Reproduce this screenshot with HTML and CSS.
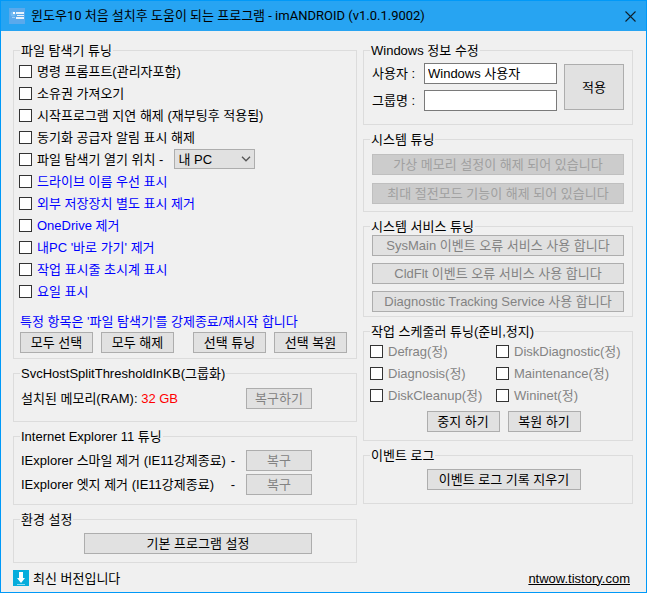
FILE: index.html
```html
<!DOCTYPE html>
<html lang="ko">
<head>
<meta charset="utf-8">
<meta name="viewport" content="width=device-width, initial-scale=1">
<title>imANDROID</title>
<link rel="stylesheet" href="styles.css">
</head>
<body>
<div class="window">
  <header class="titlebar">
    <svg class="app-icon" viewBox="0 0 16 16" aria-hidden="true">
      <rect width="16" height="16" fill="#5aa9ec"/>
      <circle cx="4" cy="6" r="2.5" fill="#74bbf2"/>
      <path d="M4 4h2v2H4z" fill="#fff"/>
      <path d="M7 4h8v2H7zM8 7h7v1H8zM7 9h8v2H7z" fill="#e8f4fd"/>
      <path d="M3 9h3v1H3z" fill="#9bcdf6"/>
    </svg>
    <h1 class="title">윈도우10 처음 설치후 도움이 되는 프로그램 - imANDROID (v1.0.1.9002)</h1>
    <button class="close" type="button" aria-label="닫기">
      <svg viewBox="0 0 11 11" aria-hidden="true"><path d="M.5 .5l10 10M10.5 .5l-10 10" fill="none" stroke="#10202c" stroke-width="1.1"/></svg>
    </button>
  </header>

  <main class="columns">
    <div class="column">
      <fieldset class="group explorer">
        <legend>파일 탐색기 튜닝</legend>
        <div class="checks">
          <label class="check"><input type="checkbox">명령 프롬프트(관리자포함)</label>
          <label class="check"><input type="checkbox">소유권 가져오기</label>
          <label class="check"><input type="checkbox">시작프로그램 지연 해제 (재부팅후 적용됨)</label>
          <label class="check"><input type="checkbox">동기화 공급자 알림 표시 해제</label>
          <div class="check-row">
            <label class="check"><input type="checkbox">파일 탐색기 열기 위치 -</label>
            <span class="select">
              <select aria-label="파일 탐색기 열기 위치"><option>내 PC</option></select>
              <svg viewBox="0 0 10 6" aria-hidden="true"><path d="M1 .8l4 4 4-4" fill="none" stroke="#555" stroke-width="1.3"/></svg>
            </span>
          </div>
          <label class="check blue"><input type="checkbox">드라이브 이름 우선 표시</label>
          <label class="check blue"><input type="checkbox">외부 저장장치 별도 표시 제거</label>
          <label class="check blue"><input type="checkbox">OneDrive 제거</label>
          <label class="check blue"><input type="checkbox">내PC '바로 가기' 제거</label>
          <label class="check blue"><input type="checkbox">작업 표시줄 초시계 표시</label>
          <label class="check blue"><input type="checkbox">요일 표시</label>
        </div>
        <p class="note blue">특정 항목은 '파일 탐색기'를 강제종료/재시작 합니다</p>
        <div class="actions split">
          <div class="actions">
            <button class="btn" type="button">모두 선택</button>
            <button class="btn" type="button">모두 해제</button>
          </div>
          <div class="actions">
            <button class="btn" type="button">선택 튜닝</button>
            <button class="btn" type="button">선택 복원</button>
          </div>
        </div>
      </fieldset>

      <fieldset class="group memory">
        <legend>SvcHostSplitThresholdInKB(그룹화)</legend>
        <div class="item">
          <span>설치된 메모리(RAM): <span class="red">32 GB</span></span>
          <button class="btn restore" type="button" disabled>복구하기</button>
        </div>
      </fieldset>

      <fieldset class="group ie">
        <legend>Internet Explorer 11 튜닝</legend>
        <div class="item">
          <span class="dashed"><span>IExplorer 스마일 제거 (IE11강제종료)</span><span>-</span></span>
          <button class="btn restore" type="button" disabled>복구</button>
        </div>
        <div class="item">
          <span class="dashed"><span>IExplorer 엣지 제거 (IE11강제종료)</span><span>-</span></span>
          <button class="btn restore" type="button" disabled>복구</button>
        </div>
      </fieldset>

      <fieldset class="group prefs">
        <legend>환경 설정</legend>
        <button class="btn" type="button">기본 프로그램 설정</button>
      </fieldset>
    </div>

    <div class="column">
      <fieldset class="group info">
        <legend>Windows 정보 수정</legend>
        <div class="form">
          <label for="user">사용자 :</label>
          <input id="user" type="text" value="Windows 사용자">
          <label for="org">그룹명 :</label>
          <input id="org" type="text">
        </div>
        <button class="btn apply" type="button">적용</button>
      </fieldset>

      <fieldset class="group system">
        <legend>시스템 튜닝</legend>
        <button class="btn dark" type="button" disabled>가상 메모리 설정이 해제 되어 있습니다</button>
        <button class="btn dark" type="button" disabled>최대 절전모드 기능이 해제 되어 있습니다</button>
      </fieldset>

      <fieldset class="group services">
        <legend>시스템 서비스 튜닝</legend>
        <button class="btn" type="button" disabled>SysMain 이벤트 오류 서비스 사용 합니다</button>
        <button class="btn" type="button" disabled>CldFlt 이벤트 오류 서비스 사용 합니다</button>
        <button class="btn" type="button" disabled>Diagnostic Tracking Service 사용 합니다</button>
      </fieldset>

      <fieldset class="group tasks">
        <legend>작업 스케줄러 튜닝(준비,정지)</legend>
        <div class="task-grid">
          <label class="check gray"><input type="checkbox" disabled>Defrag(정)</label>
          <label class="check gray"><input type="checkbox" disabled>DiskDiagnostic(정)</label>
          <label class="check gray"><input type="checkbox" disabled>Diagnosis(정)</label>
          <label class="check gray"><input type="checkbox" disabled>Maintenance(정)</label>
          <label class="check gray"><input type="checkbox" disabled>DiskCleanup(정)</label>
          <label class="check gray"><input type="checkbox" disabled>Wininet(정)</label>
        </div>
        <div class="actions center">
          <button class="btn" type="button">중지 하기</button>
          <button class="btn" type="button">복원 하기</button>
        </div>
      </fieldset>

      <fieldset class="group events">
        <legend>이벤트 로그</legend>
        <div class="actions center">
          <button class="btn wide" type="button">이벤트 로그 기록 지우기</button>
        </div>
      </fieldset>
    </div>
  </main>

  <footer class="status">
    <svg class="update-icon" viewBox="0 0 16 16" aria-hidden="true">
      <rect width="16" height="16" fill="#06addc"/>
      <path d="M6 2h4v6h2l-4 5-4-5h2z" fill="#fff"/>
      <path d="M4 14h8v1H4z" fill="#8fdcf2"/>
    </svg>
    <span>최신 버전입니다</span>
    <a class="site" href="#">ntwow.tistory.com</a>
  </footer>
</div>
</body>
</html>
```
FILE: styles.css
```css
* {
  box-sizing: border-box;
}

body {
  margin: 0;
  background: #f0f0f0;
  color: #000;
  font: 13px/15px "Liberation Sans", "Noto Sans CJK KR", sans-serif;
}

button,
input,
select {
  margin: 0;
  color: inherit;
  font: inherit;
}

.window {
  min-height: 100vh;
  border: 1px solid #0099f8;
}

.titlebar {
  display: flex;
  align-items: center;
  gap: 6px;
  height: 30px;
  padding: 0 10px 0 8px;
  background: #27a4f2;
}

.app-icon,
.update-icon {
  flex: none;
  width: 16px;
  height: 16px;
}

.title {
  flex: 1;
  margin: 0;
  font: 13px/16px Roboto, "Noto Sans CJK KR", sans-serif;
  white-space: nowrap;
}

.close {
  display: flex;
  padding: 0;
  border: 0;
  background: none;
}

.close svg {
  width: 11px;
  height: 11px;
}

.columns {
  display: grid;
  grid-template-columns: 344fr 270fr;
  gap: 6px;
  padding: 12px 13px 0 12px;
}

.column {
  display: flex;
  flex-direction: column;
  gap: 7px;
  min-width: 0;
}

.group {
  min-width: 0;
  margin: 0;
  padding: 2px 8px 5px;
  border: 1px solid #dcdcdc;
}

.group legend {
  margin-left: -2px;
  padding: 0 1px;
}

.explorer {
  padding: 2px 9px 5px 5px;
}

.explorer legend {
  margin-left: 1px;
}

.check {
  display: flex;
  align-items: center;
  gap: 5px;
  height: 22px;
  white-space: nowrap;
}

.check input {
  flex: none;
  width: 13px;
  height: 13px;
  border: 1px solid #333;
  background: #fff;
  appearance: none;
}

.check input:checked {
  background: #333;
}

.check-row {
  display: flex;
  align-items: center;
  gap: 11px;
}

.select {
  display: grid;
  align-items: center;
  width: 81px;
  height: 20px;
}

.select select,
.select svg {
  grid-area: 1 / 1;
}

.select select {
  width: 100%;
  height: 20px;
  padding: 0 3px;
  border: 1px solid #adadad;
  border-radius: 0;
  background: #e1e1e1;
  appearance: none;
}

.select svg {
  width: 10px;
  height: 6px;
  margin-right: 4px;
  justify-self: end;
  pointer-events: none;
}

.blue {
  color: #00f;
}

.red {
  color: #f00;
}

.gray {
  color: #838383;
}

.note {
  margin: 12px 0 3px 1px;
}

.actions {
  display: flex;
  gap: 8px;
}

.split {
  justify-content: space-between;
  margin-left: 1px;
}

.center {
  justify-content: center;
}

.btn {
  width: 73px;
  height: 21px;
  padding: 0;
  border: 1px solid #adadad;
  background: #e1e1e1;
  white-space: nowrap;
}

.btn:disabled {
  color: #838383;
}

.btn.dark {
  border-color: #bfbfbf;
  background: #ccc;
  color: #a0a0a0;
}

.btn.restore {
  width: 66px;
}

.btn.wide {
  width: 154px;
}

.item {
  display: flex;
  align-items: center;
  justify-content: space-between;
}

.memory,
.ie {
  padding-right: 44px;
  padding-left: 7px;
}

.memory legend,
.ie legend {
  margin-left: -1px;
}

.memory {
  padding-top: 7px;
  padding-bottom: 12px;
}

.ie {
  display: flex;
  flex-direction: column;
  gap: 3px;
  padding-top: 6px;
  padding-bottom: 9px;
}

.dashed {
  display: flex;
  justify-content: space-between;
  width: 214px;
}

.prefs {
  padding: 6px 44px 8px 70px;
}

.prefs legend {
  margin-left: -64px;
}

.prefs .btn,
.system .btn,
.services .btn {
  display: block;
  width: 100%;
}

.info {
  display: flex;
  align-items: flex-start;
  gap: 7px;
  padding-top: 5px;
  padding-bottom: 13px;
}

.form {
  display: grid;
  flex: 1;
  grid-template-columns: 52px 1fr;
  align-items: center;
  row-gap: 6px;
}

.form input {
  width: 100%;
  min-width: 0;
  height: 21px;
  padding: 0 3px 3px;
  border: 1px solid #7a7a7a;
  background: #fff;
}

.btn.apply {
  width: 60px;
  height: 46px;
  margin-top: 1px;
}

.system {
  display: flex;
  flex-direction: column;
  gap: 8px;
  padding-top: 7px;
  padding-bottom: 7px;
}

.services {
  display: flex;
  flex-direction: column;
  gap: 7px;
  padding-top: 1px;
  padding-bottom: 4px;
}

.tasks {
  padding: 1px 5px 8px 6px;
}

.tasks legend {
  margin-left: 0;
}

.task-grid {
  display: grid;
  grid-template-columns: 126px 1fr;
  margin-bottom: 5px;
}

.events {
  padding-top: 6px;
  padding-bottom: 13px;
}

.tasks .center {
  margin-left: 10px;
}

.events .center {
  margin-left: 12px;
}

.status {
  display: flex;
  align-items: center;
  gap: 4px;
  padding: 7px 16px 5px 12px;
}

.site {
  margin-left: auto;
  color: inherit;
}
```
